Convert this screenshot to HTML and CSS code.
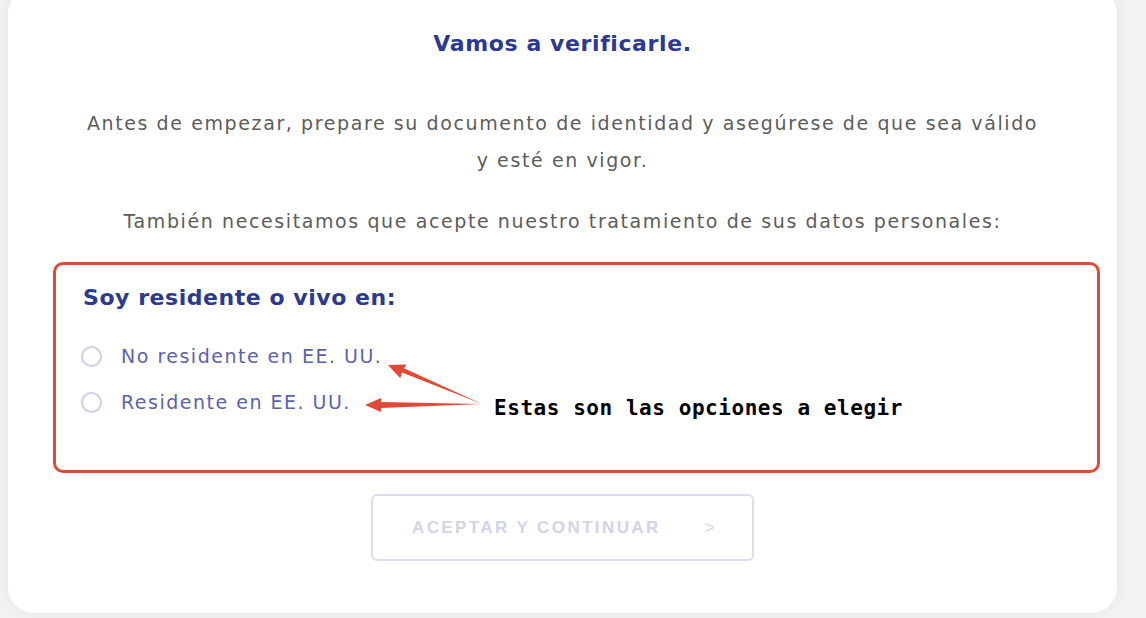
FILE: index.html
```html
<!DOCTYPE html>
<html lang="es">
<head>
<meta charset="utf-8">
<link rel="stylesheet" href="styles.css">
</head>
<body>
<div class="page">
  <div class="card">
    <h1 class="title">Vamos a verificarle.</h1>
    <p class="intro">Antes de empezar, prepare su documento de identidad y asegúrese de que sea válido<br>y esté en vigor.</p>
    <p class="intro second">También necesitamos que acepte nuestro tratamiento de sus datos personales:</p>
    <div class="highlight">
      <h2 class="question">Soy residente o vivo en:</h2>
      <label class="option"><span class="radio"></span><span class="opt-text">No residente en EE. UU.</span></label>
      <label class="option"><span class="radio"></span><span class="opt-text">Residente en EE. UU.</span></label>
      <svg class="arrows" width="140" height="60" viewBox="0 0 140 60">
        <polygon fill="#e04b38" points="117,42 37,10.6 35.2,16.2 23,3 41.6,2.4 39,6.2" />
        <polygon fill="#e04b38" points="117,42 16,40 16,36 0,43 16,50 16,46" />
      </svg>
      <span class="note">Estas son las opciones a elegir</span>
    </div>
    <div class="actions">
      <button class="btn" type="button"><span>ACEPTAR Y CONTINUAR</span><span class="chev">&gt;</span></button>
    </div>
  </div>
</div>
</body>
</html>
```
FILE: styles.css
```css
html, body {
  margin: 0;
  padding: 0;
  background: #f3f3f3;
}
.page {
  width: 1146px;
  height: 618px;
  overflow: hidden;
  position: relative;
}
.card {
  position: relative;
  margin: -12px 0 0 8px;
  width: 1109px;
  height: 625px;
  background: #ffffff;
  border-radius: 26px;
  box-shadow: 0 0 18px rgba(0,0,0,0.06);
  box-sizing: border-box;
  padding-top: 40px;
  font-family: "DejaVu Sans", sans-serif;
}
.title {
  margin: 0;
  text-align: center;
  font-size: 22px;
  font-weight: 700;
  color: #2b3990;
  line-height: 32px;
  letter-spacing: 0.6px;
}
.intro {
  margin: 0;
  text-align: center;
  color: #5c5c5c;
  font-size: 19px;
  line-height: 37px;
  letter-spacing: 1.6px;
}
.intro:first-of-type { margin-top: 45px; }
.second { margin-top: 24px; }
.highlight {
  position: relative;
  margin: 22px 0 0 45px;
  width: 1047px;
  height: 211px;
  box-sizing: border-box;
  border: 3px solid #e04b38;
  border-radius: 10px;
  padding: 18px 0 0 27px;
}
.question {
  margin: 0 0 20px;
  font-size: 22px;
  font-weight: 700;
  color: #2b3990;
  line-height: 30px;
  letter-spacing: 0.55px;
}
.option {
  display: flex;
  align-items: center;
  gap: 19px;
  height: 46px;
  margin-left: -2px;
}
.option:first-of-type { margin-top: 1px; }
.radio {
  width: 21px;
  height: 21px;
  border: 2px solid #cdd0e6;
  border-radius: 50%;
  box-sizing: border-box;
}
.opt-text {
  color: #5a62ae;
  font-size: 19px;
  letter-spacing: 1.5px;
}
.arrows {
  position: absolute;
  left: 309px;
  top: 97px;
}
.note {
  position: absolute;
  left: 438px;
  top: 131px;
  font-family: "DejaVu Sans Mono", monospace;
  font-weight: 700;
  font-size: 21px;
  color: #000;
  letter-spacing: 0.55px;
}
.actions {
  display: flex;
  justify-content: center;
  margin-top: 21px;
}
.btn {
  width: 383px;
  height: 67px;
  background: #fff;
  border: 2px solid #dcddef;
  border-radius: 6px;
  display: flex;
  align-items: center;
  padding: 0 0 0 39px;
  gap: 44px;
  font-family: "Liberation Sans", Arial, sans-serif;
  font-weight: 700;
  font-size: 17px;
  letter-spacing: 2.4px;
  color: #d2d4e8;
}
.chev { font-weight: 400; }
```
